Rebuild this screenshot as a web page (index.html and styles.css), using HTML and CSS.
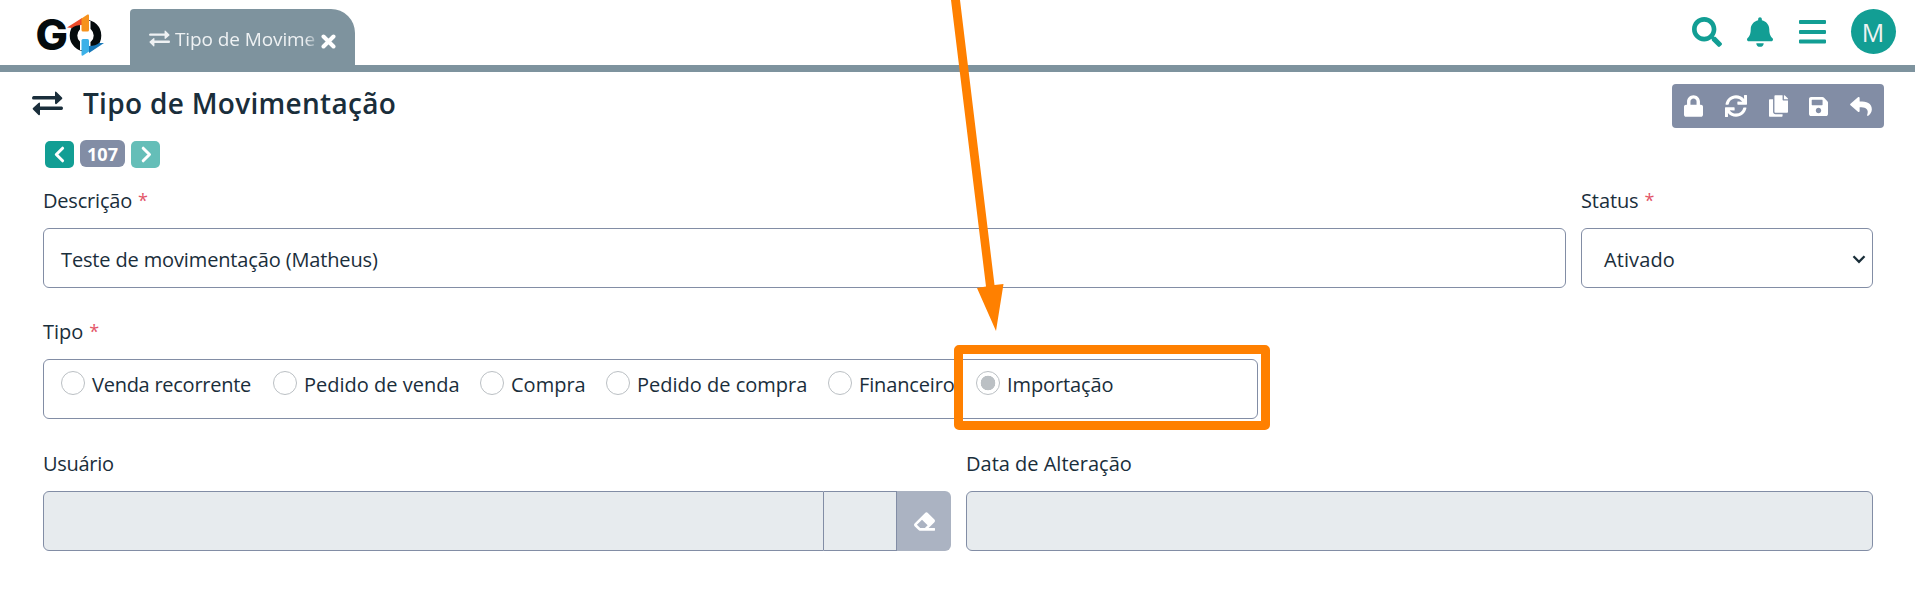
FILE: index.html
```html
<!DOCTYPE html>
<html lang="pt-BR">
<head>
<meta charset="utf-8">
<title>Tipo de Movimentação</title>
<link rel="stylesheet" href="styles.css">
</head>
<body>
<svg class="defs" width="0" height="0" aria-hidden="true">
  <symbol id="swap" viewBox="0 0 31 25"><path d="M1.500 5H23V1.600Q23 0 24.500 1L30 6.500Q30.800 7.300 30 8L24.500 13Q23 13.500 23 12V8.500H1.500Q0 8.500 0 7T1.500 5ZM29.500 15.500H8V12.600Q8 11 6.500 12L1 17Q.2 17.800 1 18.500L6.500 24Q8 24.800 8 23V19H29.500Q31 19 31 17.200T29.500 15.500Z" fill="currentColor"/></symbol>
</svg>
<header class="topbar">
  <svg class="logo" viewBox="-4 -14 72 68">
    <text class="logo-g" x="-1.500" y="36.300" textLength="32.500" lengthAdjust="spacingAndGlyphs">G</text>
    <circle cx="48.500" cy="21.500" r="12" fill="none" stroke="#050b0d" stroke-width="7.600"/>
    <path d="M43 7h10.500v29H43z" fill="#fff"/>
    <path d="M30 13.500L45 4V11Q38 11 35 14Z" fill="#ee4b2b"/>
    <path d="M44.500 4.500L50.500 .6Q52 0 52 1.500V16Q52 17.500 50.500 17.500H46Q44.500 17.500 44.500 16Z" fill="#f6921e"/>
    <path d="M67 29L52 39V32Q59 32 62 29Z" fill="#1878b8"/>
    <path d="M52 37.500L46 41.600Q44.500 42.200 44.500 40.500V26.500Q44.500 25 46 25H50.500Q52 25 52 26.500Z" fill="#3cb1e8"/>
  </svg>
  <div class="tab">
    <svg class="tab-icon"><use href="#swap"/></svg>
    <span class="tab-text">Tipo de Movime</span>
    <svg class="tab-close" viewBox="0 0 15 15"><path d="M2.500 2.500L12.500 12.500M12.500 2.500L2.500 12.500" stroke="#fff" stroke-width="4" stroke-linecap="round"/></svg>
  </div>
  <nav class="top-actions">
    <svg class="ic-search" viewBox="0 0 512 512"><path fill="currentColor" d="M505 442.700L405.300 343c-4.500-4.500-10.600-7-17-7H372c27.600-35.300 44-79.700 44-128C416 93.100 322.900 0 208 0S0 93.100 0 208s93.100 208 208 208c48.300 0 92.700-16.400 128-44v16.300c0 6.400 2.500 12.500 7 17l99.700 99.700c9.400 9.400 24.600 9.400 33.900 0l28.300-28.300c9.400-9.400 9.400-24.600.1-34zM208 336c-70.700 0-128-57.200-128-128 0-70.700 57.200-128 128-128 70.700 0 128 57.200 128 128 0 70.700-57.200 128-128 128z"/></svg>
    <svg class="ic-bell" viewBox="0 0 448 512"><path fill="currentColor" d="M224 512c35.320 0 63.970-28.650 63.970-64H160.030c0 35.350 28.650 64 63.970 64zm215.390-149.710c-19.320-20.760-55.470-51.990-55.470-154.290 0-77.700-54.480-139.900-127.940-155.160V32c0-17.670-14.320-32-31.980-32s-31.980 14.330-31.980 32v20.840C118.560 68.100 64.080 130.300 64.080 208c0 102.300-36.150 133.530-55.470 154.290-6 6.450-8.660 14.160-8.610 21.710.11 16.400 12.980 32 32.100 32h383.800c19.120 0 32-15.600 32.100-32 .05-7.550-2.610-15.270-8.610-21.710z"/></svg>
    <svg class="ic-menu" viewBox="0 0 27 24"><path d="M1 0H26Q27 0 27 1V3Q27 4 26 4H1Q0 4 0 3V1Q0 0 1 0ZM1 10H26Q27 10 27 11V13Q27 14 26 14H1Q0 14 0 13V11Q0 10 1 10ZM1 19.500H26Q27 19.500 27 20.500V22.500Q27 23.500 26 23.500H1Q0 23.500 0 22.500V20.500Q0 19.500 1 19.500Z" fill="currentColor"/></svg>
    <div class="avatar">M</div>
  </nav>
</header>
<main class="page">
  <div class="heading">
    <svg class="heading-icon"><use href="#swap"/></svg>
    <h1 class="title">Tipo de Movimentação</h1>
    <div class="toolbar">
      <svg class="ic-lock" viewBox="0 0 448 512"><path fill="currentColor" d="M400 224h-24v-72C376 68.200 307.800 0 224 0S72 68.200 72 152v72H48c-26.500 0-48 21.500-48 48v192c0 26.500 21.500 48 48 48h352c26.500 0 48-21.500 48-48V272c0-26.500-21.500-48-48-48zm-104 0H152v-72c0-39.700 32.300-72 72-72s72 32.300 72 72v72z"/></svg>
      <svg class="ic-sync" viewBox="0 0 512 512"><path fill="currentColor" d="M440.650 12.570l4 82.770A247.160 247.160 0 0 0 255.830 8C134.730 8 33.910 94.920 12.290 209.820A12 12 0 0 0 24.090 224h49.050a12 12 0 0 0 11.670-9.260 175.910 175.910 0 0 1 317-56.940l-101.460-4.860a12 12 0 0 0-12.570 12v47.410a12 12 0 0 0 12 12H500a12 12 0 0 0 12-12V12a12 12 0 0 0-12-12h-47.370a12 12 0 0 0-11.980 12.570zM255.830 432a175.610 175.610 0 0 1-146-77.800l101.800 4.870a12 12 0 0 0 12.570-12v-47.400a12 12 0 0 0-12-12H12a12 12 0 0 0-12 12V500a12 12 0 0 0 12 12h47.350a12 12 0 0 0 12-12.600l-4.150-82.570A247.170 247.170 0 0 0 255.830 504c121.110 0 221.930-86.920 243.550-201.820a12 12 0 0 0-11.800-14.180h-49.050a12 12 0 0 0-11.670 9.260A175.860 175.860 0 0 1 255.830 432z"/></svg>
      <svg class="ic-copy" viewBox="0 0 448 512"><path fill="currentColor" d="M320 448v40c0 13.255-10.745 24-24 24H24c-13.255 0-24-10.745-24-24V120c0-13.255 10.745-24 24-24h72v296c0 30.879 25.121 56 56 56h168zm0-344V0H152c-13.255 0-24 10.745-24 24v368c0 13.255 10.745 24 24 24h272c13.255 0 24-10.745 24-24V128H344c-13.200 0-24-10.800-24-24zm120.971-31.029L375.029 7.029A24 24 0 0 0 358.059 0H352v96h96v-6.059a24 24 0 0 0-7.029-16.970z"/></svg>
      <svg class="ic-save" viewBox="0 0 448 448"><path fill="currentColor" d="M433.941 97.941l-83.882-83.882A48 48 0 0 0 316.118 0H48C21.490 0 0 21.490 0 48v352c0 26.510 21.490 48 48 48h352c26.510 0 48-21.490 48-48V131.882a48 48 0 0 0-14.059-33.941zM224 384c-35.346 0-64-28.654-64-64s28.654-64 64-64 64 28.654 64 64-28.654 64-64 64zm96-304.520V180c0 6.627-5.373 12-12 12H76c-6.627 0-12-5.373-12-12V76c0-6.627 5.373-12 12-12h228.520c3.183 0 6.235 1.264 8.485 3.515l3.480 3.480A11.996 11.996 0 0 1 320 79.480z"/></svg>
      <svg class="ic-reply" viewBox="0 32 512 448"><path fill="currentColor" d="M8.309 189.836L184.313 37.851C199.719 24.546 224 35.347 224 56.015v80.053c160.629 1.839 288 34.032 288 186.258 0 61.441-39.581 122.309-83.333 154.132-13.653 9.931-33.111-2.533-28.077-18.631 45.344-145.012-21.507-183.510-176.590-185.742V360c0 20.700-24.300 31.453-39.687 18.164l-176.004-152c-11.071-9.562-11.086-26.753 0-36.328z"/></svg>
    </div>
  </div>
  <div class="pager">
    <span class="pager-btn"><svg viewBox="0 0 12 17"><path d="M8.600 2.200L2.300 8.500L8.600 14.800"/></svg></span>
    <span class="pager-id">107</span>
    <span class="pager-btn pager-off"><svg viewBox="0 0 12 17"><path d="M3.200 2.200L9.500 8.500L3.200 14.800"/></svg></span>
  </div>
  <section class="row row-desc">
    <div class="field"><label class="label"><span class="t-desc">Descrição</span><i class="req">*</i></label><div class="control"><span class="t-value">Teste de movimentação (Matheus)</span></div></div>
    <div class="field"><label class="label"><span class="t-status">Status</span><i class="req">*</i></label><div class="control select"><span class="t-ativado">Ativado</span><svg class="caret" viewBox="0 0 14 9"><path d="M1.500 1.300L7 6.800L12.500 1.300" fill="none" stroke="#1a2e39" stroke-width="2.300"/></svg></div></div>
  </section>
  <section class="row row-tipo">
    <div class="field"><label class="label"><span class="t-tipo">Tipo</span><i class="req">*</i></label>
      <div class="control radios">
        <span class="radio"><b class="dot"></b><span class="t-venda">Venda recorrente</span></span>
        <span class="radio"><b class="dot"></b><span>Pedido de venda</span></span>
        <span class="radio"><b class="dot"></b><span>Compra</span></span>
        <span class="radio"><b class="dot"></b><span>Pedido de compra</span></span>
        <span class="radio"><b class="dot"></b><span class="t-fin">Financeiro</span></span>
        <span class="radio"><b class="dot dot-on"></b><span class="t-imp">Importação</span></span>
      </div>
    </div>
  </section>
  <section class="row row-user">
    <div class="field"><label class="label"><span class="t-user">Usuário</span></label>
      <div class="group"><div class="g-main"></div><div class="g-side"></div><div class="g-btn"><svg viewBox="0 0 512 448"><path fill="currentColor" fill-rule="evenodd" d="M497.900 241.900c18.800-18.700 18.800-49.100 0-67.900L337.900 14.100c-18.700-18.700-49.100-18.700-67.900 0L14.100 270.100c-18.800 18.700-18.800 49.100 0 67.900l96 96A48 48 0 0 0 144 448h356c6.600 0 12-5.400 12-12v-40c0-6.600-5.400-12-12-12H355.900zM195.300 179.300l137.400 137.400-67.300 67.300H150.600l-80-80z"/></svg></div></div>
    </div>
    <div class="field"><label class="label"><span class="t-data">Data de Alteração</span></label><div class="control disabled"></div></div>
  </section>
</main>
<div class="highlight"></div>
<svg class="arrow" viewBox="0 0 60 332"><path d="M1 0H10L44.500 285L53.500 284L46 331L27 288L36 286.500Z" fill="#ff8000"/></svg>
</body>
</html>
```
FILE: styles.css
```css
* { box-sizing: border-box; }
body { margin: 0; width: 1915px; height: 609px; position: relative; overflow: hidden; background: #fff; color: #1a2e3b; font: 20px/28px "Open Sans", "Noto Sans", sans-serif; }
svg { display: block; flex: none; }
.defs { position: absolute; }
.topbar { height: 72px; border-bottom: 7px solid #7e939e; display: flex; align-items: flex-start; padding-left: 33px; }
.logo { width: 72px; height: 68px; overflow: visible; }
.logo-g { font: 800 42px Inter, sans-serif; fill: #050b0d; }
.tab { margin: 9px 0 0 25px; width: 225px; height: 56px; padding: 3px 0 0 19px; border-radius: 4px 24px 0 0; background: #7e939e; color: #eef1f3; display: flex; align-items: center; }
.tab-icon { width: 21px; height: 17px; }
.tab-text { width: 141px; margin-left: 5px; font-size: 19px; white-space: nowrap; letter-spacing: -.1px; -webkit-mask-image: linear-gradient(90deg, #000 92%, rgba(0,0,0,.3)); mask-image: linear-gradient(90deg, #000 92%, rgba(0,0,0,.3)); }
.tab-close { width: 15px; height: 15px; margin: 5px 0 0 5px; }
.top-actions { margin-left: auto; display: flex; align-items: flex-start; color: #129e94; padding-right: 19px; }
.ic-search { width: 30px; height: 30px; margin-top: 17px; }
.ic-bell { width: 26px; height: 30px; margin: 17px 0 0 25px; }
.ic-menu { width: 27px; height: 24px; margin: 20px 0 0 26px; }
.avatar { width: 45px; height: 45px; margin: 9px 0 0 25px; border-radius: 50%; background: #129e94; color: #eef3f2; font: 25px/47px "Open Sans", sans-serif; text-align: center; padding-right: 1px; }
.page { padding: 12px 42px 0 43px; }
.heading { height: 44px; display: flex; align-items: flex-start; margin-left: -11px; margin-right: -11px; }
.heading-icon { width: 31px; height: 25px; margin-top: 7px; }
.title { margin: 0 0 0 20px; font-weight: 600; font-size: 28px; line-height: 38px; letter-spacing: .3px; white-space: nowrap; }
.toolbar { margin-left: auto; width: 212px; height: 44px; border-radius: 4px; background: #828da5; color: #fff; display: flex; align-items: center; padding-left: 12px; }
.ic-lock { width: 19px; height: 22px; }
.ic-sync { width: 22px; height: 22px; margin-left: 22px; }
.ic-copy { width: 19px; height: 22px; margin-left: 22px; }
.ic-save { width: 19px; height: 19px; margin-left: 21px; }
.ic-reply { width: 22px; height: 19px; margin-left: 22px; }
.pager { display: flex; height: 28px; margin: 12px 0 0 2px; gap: 6px; }
.pager-btn { width: 29px; height: 27px; margin-top: 1px; border-radius: 5px; background: #129e94; display: flex; align-items: center; justify-content: center; }
.pager-btn svg { width: 12px; height: 17px; fill: none; stroke: #fff; stroke-width: 3; stroke-linecap: round; stroke-linejoin: round; }
.pager-off { background: #65beb8; }
.pager-id { width: 45px; height: 27px; border-radius: 6px; background: #828da5; color: #fff; font-weight: 700; font-size: 18px; text-align: center; line-height: 28px; }
.row { display: grid; column-gap: 15px; }
.row-desc { margin-top: 19px; grid-template-columns: 1523px 292px; }
.row-tipo { margin-top: 30px; grid-template-columns: 1215px; }
.row-user { margin-top: 31px; grid-template-columns: 908px 907px; }
.label { display: flex; height: 41px; white-space: nowrap; }
.req { font-style: normal; font-size: 18px; line-height: 26px; color: #e35568; margin-left: 6px; }
.t-desc { letter-spacing: -.2px; }
.t-status { letter-spacing: -.1px; }
.t-value { letter-spacing: -.14px; padding-top: 1px; }
.t-ativado { letter-spacing: .1px; padding-top: 1px; }
.t-venda { letter-spacing: -.26px; }
.t-fin { letter-spacing: -.15px; }
.t-imp { letter-spacing: -.1px; }
.t-user { letter-spacing: -.3px; }
.control { height: 60px; border: 1px solid #828da5; border-radius: 6px; padding: 2px 17px 0; display: flex; align-items: center; white-space: nowrap; }
.select { padding: 2px 6px 0 22px; justify-content: space-between; }
.caret { width: 14px; height: 9px; }
.radios { display: grid; grid-template-columns: 212px 207px 126px 222px 148px auto; align-items: start; padding-top: 11px; }
.radio { display: flex; align-items: flex-start; gap: 7px; }
.dot { width: 24px; height: 24px; border: 1px solid #bbc0c4; border-radius: 50%; flex: none; }
.dot-on { background: radial-gradient(circle, #bbc0c4 7px, #fff 7.600px); }
.disabled { background: #e7ebee; }
.group { display: flex; height: 60px; }
.g-main { width: 781px; border: 1px solid #828da5; border-radius: 6px 0 0 6px; background: #e7ebee; }
.g-side { width: 73px; border: 1px solid #828da5; border-left: 0; background: #e7ebee; }
.g-btn { flex: 1; border-radius: 0 6px 6px 0; background: #abb3c2; color: #fff; display: flex; align-items: center; justify-content: center; }
.g-btn svg { width: 21px; height: 19px; }
.highlight { position: absolute; left: 954px; top: 345px; width: 316px; height: 85px; border: 9px solid #ff8000; border-radius: 5px; }
.arrow { position: absolute; left: 950px; top: 0; width: 60px; height: 332px; }
```
